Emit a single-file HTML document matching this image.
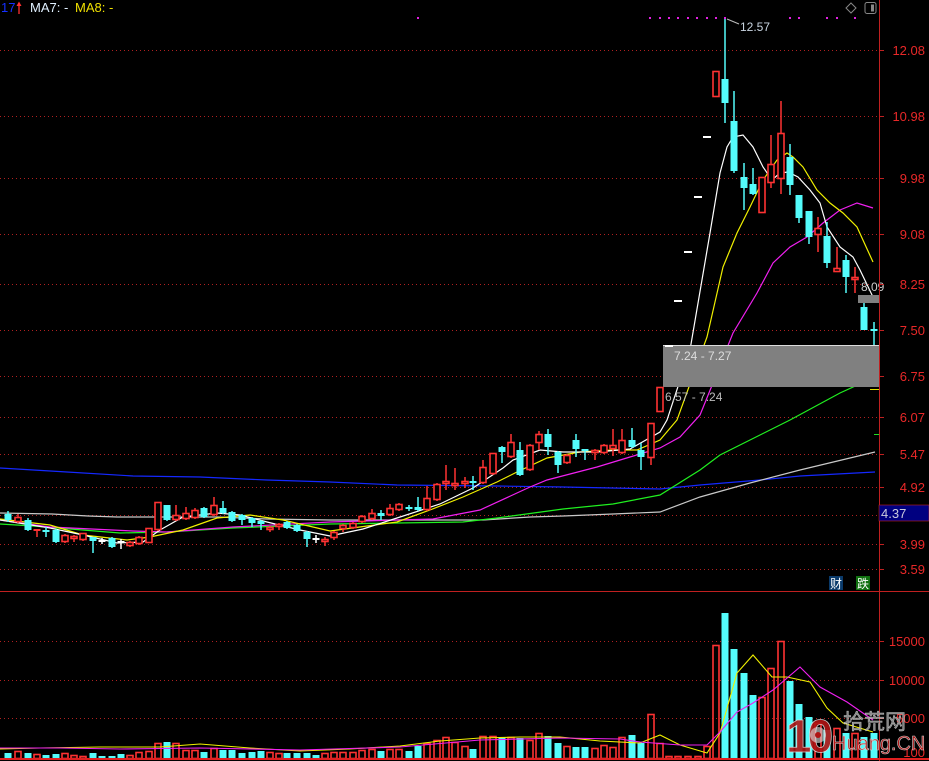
<!DOCTYPE html>
<html><head><meta charset="utf-8"><style>
html,body{margin:0;padding:0;background:#000;width:929px;height:761px;overflow:hidden}
svg{display:block}
text{font-family:"Liberation Sans","Noto Sans CJK SC",sans-serif}
</style></head><body>
<svg id="s" width="929" height="761" viewBox="0 0 929 761" xmlns="http://www.w3.org/2000/svg">
<g id="grid" stroke="#b02020" stroke-width="1" stroke-dasharray="1 3"></g>
<g id="mas" fill="none" stroke-width="1.2"></g>
<rect x="663" y="346" width="216" height="41" fill="#808080"/>
<line x1="663" y1="345.5" x2="879" y2="345.5" stroke="#ddd" stroke-width="1"/>
<rect x="858" y="295" width="21" height="8" fill="#808080"/>
<text x="861" y="291" font-size="12" fill="#ccc">8.09</text>
<text x="674" y="360" font-size="12" fill="#ddd">7.24 - 7.27</text>
<text x="665" y="401" font-size="12" fill="#bbb">6.57 - 7.24</text>
<g id="candles"></g>
<g id="vols"></g>
<g id="vma" fill="none" stroke-width="1.1"></g>
<line x1="879.5" y1="0" x2="879.5" y2="761" stroke="#c02020"/>
<line x1="0" y1="591.5" x2="929" y2="591.5" stroke="#c02020"/>
<line x1="0" y1="759" x2="929" y2="759" stroke="#e02020" stroke-width="2"/>
<g id="axis" font-size="13" fill="#e82828" text-anchor="end"></g>
<rect x="879" y="505" width="50" height="16" fill="#000080" stroke="#c02020" stroke-width="0.6"/>
<text x="881" y="518" font-size="13" fill="#ccd">4.37</text>
<text x="1" y="12" font-size="13" fill="#1530ff">17</text>
<line x1="19" y1="3" x2="19" y2="14" stroke="#ff3030" stroke-width="1.3"/>
<path d="M16.5 6 L19 1.5 L21.5 6 Z" fill="#ff3030"/>
<text x="30" y="12" font-size="13" fill="#e0f0ff">MA7: -</text>
<text x="75" y="12" font-size="13" fill="#f0e000">MA8: -</text>
<path d="M851 3 L856 8 L851 13 L846 8 Z" fill="none" stroke="#888"/>
<rect x="865" y="2.5" width="11" height="11" rx="2" fill="none" stroke="#888"/>
<rect x="871" y="4.5" width="3" height="7" fill="#888"/>
<g id="dots" fill="#e020e0"></g>
<line x1="727" y1="19" x2="739" y2="24" stroke="#bbb"/>
<text x="740" y="31" font-size="12" fill="#c8d4e0">12.57</text>
<line x1="874" y1="434.5" x2="879" y2="434.5" stroke="#20e020"/>
<line x1="870" y1="389.5" x2="879" y2="389.5" stroke="#e0e000"/>
<rect x="829" y="576" width="14" height="14" fill="#0a3a6a"/>
<text x="830" y="588" font-size="12" fill="#fff" font-family="Noto Sans CJK SC,sans-serif">财</text>
<rect x="856" y="576" width="14" height="14" fill="#107010"/>
<text x="857" y="588" font-size="12" fill="#fff" font-family="Noto Sans CJK SC,sans-serif">跌</text>
<text x="786" y="752" font-size="46" font-weight="bold" fill="#b01414" stroke="#ddd" stroke-width="0.8" opacity="0.9" letter-spacing="-4">10</text>
<circle cx="818" cy="735" r="8" fill="#e0e0e0" opacity="0.6"/>
<circle cx="818" cy="735" r="3" fill="#b01414"/>
<text x="843" y="729" font-size="21" fill="#999" stroke="#ddd" stroke-width="0.5" opacity="0.85" font-family="Noto Sans CJK SC,sans-serif">拾荒网</text>
<text x="832" y="750" font-size="20" fill="#c01818" stroke="#ddd" stroke-width="0.6" opacity="0.9">Huang.CN</text>
</svg>
<script>
var NS="http://www.w3.org/2000/svg";
function el(p,t,a){var e=document.createElementNS(NS,t);for(var k in a)e.setAttribute(k,a[k]);p.appendChild(e);return e;}
var g=document.getElementById('grid');
[50,116,178,234,284,330,376,417,454,487,515,544,569,641,680,718].forEach(function(y){el(g,'line',{x1:0,y1:y+.5,x2:879,y2:y+.5});});
var ax=document.getElementById('axis');
[[50,'12.08'],[116,'10.98'],[178,'9.98'],[234,'9.08'],[284,'8.25'],[330,'7.50'],[376,'6.75'],[417,'6.07'],[454,'5.47'],[487,'4.92'],[544,'3.99'],[569,'3.59'],[641,'15000'],[680,'10000'],[718,'5000'],[752,'100']].forEach(function(a){var t=el(ax,'text',{x:925,y:a[0]+5});t.textContent=a[1];});
[50,116,178,234,284,330,376,417,454,487,544,569,641,680,718].forEach(function(y){el(ax,'line',{x1:879,y1:y+.5,x2:884,y2:y+.5,stroke:'#c02020'});});
var C=[
[8,514,520,511,522,'c',753],[18,517,522,514,523,'r',751],[28,520,530,518,531,'c',753],[37,529,531,529,537,'r',754],[46,530,532,527,537,'c',755],[56,530,542,529,543,'c',754],[65,535,542,534,543,'r',753],[74,536,539,535,542,'r',755],[83,533,540,533,541,'r',756],[93,537,541,537,553,'c',753],[102,540,542,538,544,'w',756],[112,538,547,537,548,'c',756],[121,541,543,539,549,'w',754],[130,542,546,541,547,'r',755],[139,537,544,536,545,'r',752],[149,528,543,528,543,'r',751],[158,502,530,502,531,'r',743],[167,505,520,505,521,'c',742],[176,515,520,505,521,'r',743],[186,513,519,507,520,'r',750],[195,510,518,508,519,'r',750],[204,508,517,507,518,'c',752],[214,505,515,497,516,'r',748],[223,508,513,501,514,'c',750],[232,512,521,511,522,'c',750],[242,515,520,514,525,'c',753],[252,518,523,517,527,'c',752],[261,521,524,520,530,'c',751],[270,527,530,526,532,'r',752],[279,524,527,523,530,'r',753],[287,522,528,521,529,'c',753],[297,525,531,524,532,'c',753],[307,532,539,531,547,'c',753],[316,538,540,535,543,'w',755],[325,539,542,537,546,'r',753],
[334,532,538,531,540,'r',752],[343,525,529,524,532,'r',752],[353,523,528,522,529,'r',752],[362,516,522,515,523,'r',750],[372,513,519,509,520,'r',749],[381,513,516,510,520,'c',751],[390,508,515,504,516,'r',749],[399,504,510,503,511,'r',749],[409,507,508,505,511,'c',751],[418,507,510,497,511,'c',746],[427,498,510,486,511,'r',743],[437,484,500,483,501,'r',740],[446,481,484,465,490,'r',737],[455,483,486,468,490,'r',742],[465,481,484,477,488,'r',746],[473,481,483,476,490,'c',749],[483,467,483,460,484,'r',736],[493,453,474,453,475,'r',736],[502,447,452,446,463,'c',737],[511,442,457,434,458,'r',737],[520,450,475,442,476,'c',738],[530,445,470,444,471,'r',740],[539,434,443,431,450,'r',733],[548,434,447,429,455,'c',736],[558,452,465,451,473,'c',743],[567,455,463,454,464,'r',746],[576,440,449,434,457,'c',747],[585,449,451,449,460,'c',747],[595,450,453,449,460,'r',748],[604,445,453,444,454,'r',745],[613,445,449,429,456,'r',747],[622,440,453,429,454,'r',737],[632,440,447,428,448,'c',735],[641,450,457,443,470,'c',743],[651,423,458,423,465,'r',714],
[660,387,412,387,412,'r',743],[669,346,346,346,346,'d',756],[678,301,301,301,301,'d',756],[688,252,252,252,252,'d',756],[698,197,197,197,197,'d',756],[707,137,137,137,137,'d',746],
[716,71,97,71,97,'r',645],[725,79,103,18,123,'c',613],[734,121,171,91,173,'c',649],[744,177,188,163,210,'c',673],[753,184,194,168,195,'c',695],[762,177,213,177,213,'r',697],[771,164,183,135,188,'r',668],[781,133,179,101,194,'r',641],[790,157,185,144,195,'c',681],[799,195,218,195,223,'c',704],[809,211,237,211,244,'c',717],[818,228,235,217,252,'r',723],[827,236,263,222,268,'c',730],[837,268,272,247,272,'r',728],[846,260,277,255,293,'c',733],[855,277,280,267,293,'r',733],[864,307,330,303,330,'c',737],[874,329,330,322,345,'c',733]];
var cg=document.getElementById('candles'),vg=document.getElementById('vols');
var CY='#54fcfc',RD='#ff3232';
C.forEach(function(c){var x=c[0],t=c[1],b=c[2],h=c[3],l=c[4],k=c[5],v=c[6];
 if(k=='d'){el(cg,'rect',{x:x-4,y:t-1,width:8,height:2,fill:'#fff'});}
 else{var col=k=='c'?CY:(k=='w'?'#fff':RD);
  el(cg,'line',{x1:x,y1:h,x2:x,y2:l,stroke:col,'stroke-width':1.5});
  if(b-t<3){el(cg,'rect',{x:x-3.5,y:t,width:7,height:Math.max(2,b-t),fill:col});}
  else if(k=='r'){el(cg,'rect',{x:x-3,y:t+.5,width:6,height:b-t-1,fill:'#000',stroke:RD,'stroke-width':1.6});}
  else{el(cg,'rect',{x:x-3.5,y:t,width:7,height:b-t,fill:col});}
 }
 if(k=='c'||k=='w'){el(vg,'rect',{x:x-3.5,y:v,width:7,height:758-v,fill:CY});}
 else{el(vg,'rect',{x:x-3,y:v+.5,width:6,height:758-v,fill:'none',stroke:RD,'stroke-width':1.6});}
});
function pl(p,pts,col){el(p,'polyline',{points:pts,stroke:col});}
var m=document.getElementById('mas');
pl(m,"0,468 67,472 133,476 200,477 267,480 330,482 397,485 497,486 563,487 660,489 700,485 760,480 800,476 875,472",'#1428ff');
pl(m,"0,513 52,514 88,516 117,517 217,517 267,519 330,520 483,520 530,517 563,516 613,514 660,512 700,497 750,483 800,470 875,452",'#c8c8c8');
pl(m,"0,524 33,526 120,533 167,532 200,530 233,528 330,524 463,522 497,518 563,509 613,504 660,495 700,470 720,455 760,435 790,420 840,393 875,377",'#20f020');
pl(m,"0,520 50,527 133,531 167,532 233,527 330,522 433,519 480,510 530,487 547,480 597,467 630,457 660,448 680,437 700,415 713,383 733,333 757,293 773,263 790,247 807,237 823,223 840,210 857,203 873,208",'#f020f0');
pl(m,"0,519 50,525 83,535 127,540 150,537 183,530 217,518 250,515 283,520 330,531 397,522 430,510 463,497 497,482 517,472 547,458 580,452 613,450 637,450 660,440 677,420 707,337 723,267 737,233 750,207 763,180 777,160 787,153 793,157 803,167 817,190 830,203 843,213 857,227 873,262",'#f0f000');
pl(m,"0,520 50,528 83,535 117,543 143,542 160,530 183,517 217,513 240,515 267,522 300,530 330,536 363,529 397,518 440,504 473,488 503,468 513,460 540,450 563,452 597,452 630,449 660,432 667,420 690,350 710,233 720,173 727,147 733,137 743,135 753,147 763,167 772,180 780,173 788,172 798,177 810,190 820,203 827,227 840,247 853,257 860,270 873,297",'#fff');
var vm=document.getElementById('vma');
pl(vm,"0,749 40,748 100,747 160,747 200,744 250,748 300,751 350,749 400,746 440,741 480,738 520,737 560,737 600,741 640,743 660,735 680,745 707,753 720,733 737,673 753,655 772,677 787,677 810,682 827,708 843,723 873,732",'#f0f000');
pl(vm,"0,748 60,748 120,749 200,748 300,750 400,747 480,740 560,738 620,739 640,742 680,745 707,745 720,732 737,712 753,703 773,690 800,667 820,687 847,702 873,720",'#f020f0');
var d=document.getElementById('dots');
[418,650,660,669,678,688,697,707,716,725,790,799,827,837,855].forEach(function(x){el(d,'rect',{x:x-1,y:17,width:2,height:2});});
</script>
</body></html>
